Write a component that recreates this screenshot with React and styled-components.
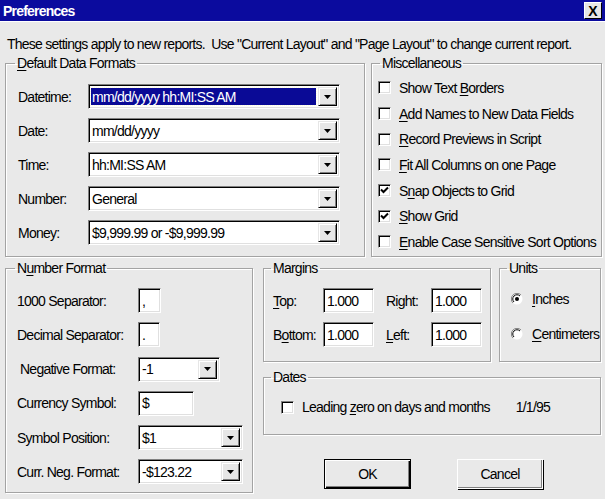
import React from 'react';
import styled, { createGlobalStyle } from 'styled-components';

const Global = createGlobalStyle`
  html, body { margin:0; padding:0; background:#e9e9e9; }
  body {
    font-family: "Liberation Sans", Arial, sans-serif;
    font-size:14px;
    letter-spacing:-0.75px;
    color:#000;
    overflow:hidden;
  }
`;

const Window = styled.div`
  width:605px;
  height:499px;
  background:#e9e9e9;
  display:flex;
  flex-direction:column;
`;

const TitleBar = styled.div`
  height:21px;
  background:#0b0b9e;
  border-bottom:1px solid #fff;
  display:flex;
  align-items:center;
  justify-content:space-between;
  padding:0 3px 0 3px;
`;

const Title = styled.span`
  color:#fff;
  font-weight:bold;
  font-size:14px;
  letter-spacing:-0.8px;
`;

const CloseButton = styled.div`
  width:18px;
  height:17px;
  box-sizing:border-box;
  background:#e6e6e6;
  border:1px solid;
  border-color:#fff #000 #000 #fff;
  display:flex;
  align-items:center;
  justify-content:center;
  font-weight:bold;
  font-size:14px;
  letter-spacing:0;
  line-height:1;
`;

const Body = styled.div`
  flex:1;
  padding:14px 5px 0 5px;
  display:flex;
  flex-direction:column;
`;

const Intro = styled.div`
  line-height:17px;
  padding-left:2px;
  white-space:nowrap;
`;

const TopRow = styled.div`
  display:grid;
  grid-template-columns:360px 231px;
  gap:6px;
  margin-top:2px;
`;

const BottomRow = styled.div`
  display:grid;
  grid-template-columns:248px 338px;
  gap:10px;
  margin-top:3px;
`;

const Group = styled.fieldset`
  margin:0;
  min-width:0;
  border:1px solid #a3a3a3;
  box-shadow:1px 1px 0 #fff, inset 1px 1px 0 #fff;
  padding:${p => p.$pad || '0'};
  height:${p => p.$h}px;
  box-sizing:border-box;
`;

const Legend = styled.legend`
  padding:0 2px;
  margin-left:${p => p.$ml}px;
  line-height:17px;
`;

const U = styled.span`
  text-decoration:underline;
  text-underline-offset:2px;
`;

const FormGrid = styled.div`
  display:grid;
  grid-template-columns:${p => p.$cols};
  row-gap:${p => p.$gap}px;
  align-items:center;
`;

const Label = styled.span`
  padding-left:${p => p.$indent || 0}px;
  white-space:nowrap;
`;

const Sunken = styled.div`
  height:25px;
  width:${p => p.$w}px;
  box-sizing:border-box;
  background:#fff;
  border:1px solid;
  border-color:#808080 #fff #fff #808080;
  box-shadow:inset 1px 1px 0 #000, inset -1px -1px 0 #e0e0e0;
  display:flex;
  align-items:stretch;
`;

const Value = styled.div`
  flex:1;
  display:flex;
  align-items:center;
  padding-left:3px;
  white-space:nowrap;
  overflow:hidden;
`;

const Selected = styled.div`
  flex:1;
  margin:3px 2px 3px 2px;
  display:flex;
  align-items:center;
  padding-left:1px;
  background:#0a0a96;
  color:#fff;
  outline:1px dotted #ffd;
  white-space:nowrap;
`;

const ArrowButton = styled.div`
  width:17px;
  flex:none;
  margin:2px 2px 2px 0;
  background:#e6e6e6;
  border:1px solid;
  border-color:#e6e6e6 #000 #000 #e6e6e6;
  box-shadow:inset 1px 1px 0 #fff, inset -1px -1px 0 #808080;
  display:flex;
  align-items:center;
  justify-content:center;
`;

const Arrow = () => (
  <svg width="7" height="4" viewBox="0 0 7 4">
    <path d="M0 0h7L3.5 4z" fill="#000" />
  </svg>
);

function Combo({ w, value, selected }) {
  return (
    <Sunken $w={w}>
      {selected ? <Selected>{value}</Selected> : <Value>{value}</Value>}
      <ArrowButton><Arrow /></ArrowButton>
    </Sunken>
  );
}

function TextBox({ w, value }) {
  return (
    <Sunken $w={w}>
      <Value>{value}</Value>
    </Sunken>
  );
}

const CheckList = styled.div`
  display:flex;
  flex-direction:column;
  padding:${p => p.$pad};
`;

const CheckRow = styled.div`
  height:${p => p.$h || 25.7}px;
  display:flex;
  align-items:center;
  gap:${p => p.$gap || 8}px;
  white-space:nowrap;
  svg { flex:none; }
`;

const Box = styled.div`
  width:13px;
  height:13px;
  flex:none;
  box-sizing:border-box;
  background:#fff;
  border:1px solid;
  border-color:#808080 #fff #fff #808080;
  box-shadow:inset 1px 1px 0 #000, inset -1px -1px 0 #e0e0e0;
  display:flex;
  align-items:center;
  justify-content:center;
`;

function Check({ checked, children, h }) {
  return (
    <CheckRow $h={h}>
      <Box>
        {checked && (
          <svg width="9" height="9" viewBox="0 0 9 9">
            <path d="M1 3.5l2.5 2.5L8 1.5" stroke="#000" strokeWidth="2" fill="none" />
          </svg>
        )}
      </Box>
      <span>{children}</span>
    </CheckRow>
  );
}

function Radio({ on, children }) {
  return (
    <CheckRow $h={35} $gap={9}>
      <svg width="12" height="12" viewBox="0 0 12 12">
        <circle cx="6" cy="6" r="5.5" fill="#fff" />
        <path d="M10 2A5.6 5.6 0 0 0 2 10" stroke="#808080" strokeWidth="1" fill="none" />
        <path d="M9 3A4.2 4.2 0 0 0 3 9" stroke="#000" strokeWidth="1" fill="none" />
        {on && <circle cx="6" cy="6" r="2" fill="#000" />}
      </svg>
      <span>{children}</span>
    </CheckRow>
  );
}

const DatesRow = styled.div`
  display:flex;
  align-items:center;
  padding:12px 0 0 17px;
`;

const DateSample = styled.span`
  margin-left:26px;
`;

const Buttons = styled.div`
  display:flex;
  gap:46px;
  padding:17px 0 0 61px;
`;

const Button = styled.div`
  width:${p => p.$default ? 87 : 86}px;
  height:30px;
  box-sizing:border-box;
  background:#e9e9e9;
  display:flex;
  align-items:center;
  justify-content:center;
  border:1px solid ${p => p.$default ? '#000' : '#fff'};
  box-shadow:${p => p.$default
    ? 'inset 1px 1px 0 #fff, inset -1px -1px 0 #000, inset -2px -2px 0 #808080'
    : '1px 1px 0 #000, inset -1px -1px 0 #808080'};
`;

const RightColumn = styled.div`
  display:flex;
  flex-direction:column;
  gap:7px;
`;

const MarginsUnits = styled.div`
  display:grid;
  grid-template-columns:228px 102px;
  gap:8px;
`;

export default function App() {
  return (
    <Window>
      <Global />
      <TitleBar>
        <Title>Preferences</Title>
        <CloseButton>X</CloseButton>
      </TitleBar>
      <Body>
        <Intro>These settings apply to new reports.&nbsp; Use "Current Layout" and "Page Layout" to change current report.</Intro>
        <TopRow>
          <Group $h={202} $pad="12px 0 0 12px">
            <Legend $ml={-3}><U>D</U>efault Data Formats</Legend>
            <FormGrid $cols="70px 252px" $gap={9}>
              <Label>Datetime:</Label>
              <Combo w={252} value="mm/dd/yyyy hh:MI:SS AM" selected />
              <Label>Date:</Label>
              <Combo w={252} value="mm/dd/yyyy" />
              <Label>Time:</Label>
              <Combo w={252} value="hh:MI:SS AM" />
              <Label>Number:</Label>
              <Combo w={252} value="General" />
              <Label>Money:</Label>
              <Combo w={252} value="$9,999.99 or -$9,999.99" />
            </FormGrid>
          </Group>
          <Group $h={202} $pad="0 0 0 6px">
            <Legend $ml={2}>Miscellaneous</Legend>
            <CheckList $pad="3px 0 0 0">
              <Check>Show Text <U>B</U>orders</Check>
              <Check><U>A</U>dd Names to New Data Fields</Check>
              <Check><U>R</U>ecord Previews in Script</Check>
              <Check><U>F</U>it All Columns on one Page</Check>
              <Check checked>S<U>n</U>ap Objects to Grid</Check>
              <Check checked><U>S</U>how Grid</Check>
              <Check><U>E</U>nable Case Sensitive Sort Options</Check>
            </CheckList>
          </Group>
        </TopRow>
        <BottomRow>
          <Group $h={233} $pad="11px 0 0 11px">
            <Legend $ml={-2}>N<U>u</U>mber Format</Legend>
            <FormGrid $cols="121px 110px" $gap={9.3}>
              <Label>1000 Separator:</Label>
              <TextBox w={23} value="," />
              <Label>Decimal Separator:</Label>
              <TextBox w={22} value="." />
              <Label $indent={3}>Negative Format:</Label>
              <Combo w={82} value="-1" />
              <Label>Currency Symbol:</Label>
              <TextBox w={56} value="$" />
              <Label>Symbol Position:</Label>
              <Combo w={105} value="$1" />
              <Label>Curr. Neg. Format:</Label>
              <Combo w={105} value="-$123.22" />
            </FormGrid>
          </Group>
          <RightColumn>
            <MarginsUnits>
              <Group $h={102} $pad="11px 0 0 9px">
                <Legend $ml={-2}>Margins</Legend>
                <FormGrid $cols="50px 51px 57px 51px" $gap={9}>
                  <Label><U>T</U>op:</Label>
                  <TextBox w={51} value="1.000" />
                  <Label $indent={12}>Ri<U>g</U>ht:</Label>
                  <TextBox w={51} value="1.000" />
                  <Label>B<U>o</U>ttom:</Label>
                  <TextBox w={51} value="1.000" />
                  <Label $indent={12}><U>L</U>eft:</Label>
                  <TextBox w={51} value="1.000" />
                </FormGrid>
              </Group>
              <Group $h={102} $pad="4px 0 0 11px">
                <Legend $ml={-4}>Units</Legend>
                <CheckList $pad="0">
                  <Radio on><U>I</U>nches</Radio>
                  <Radio><U>C</U>entimeters</Radio>
                </CheckList>
              </Group>
            </MarginsUnits>
            <Group $h={66} $pad="0">
              <Legend $ml={7}>Dates</Legend>
              <DatesRow>
                <Check h={18}>Leading <U>z</U>ero on days and months</Check>
                <DateSample>1/1/95</DateSample>
              </DatesRow>
            </Group>
            <Buttons>
              <Button $default>OK</Button>
              <Button>Cancel</Button>
            </Buttons>
          </RightColumn>
        </BottomRow>
      </Body>
    </Window>
  );
}
